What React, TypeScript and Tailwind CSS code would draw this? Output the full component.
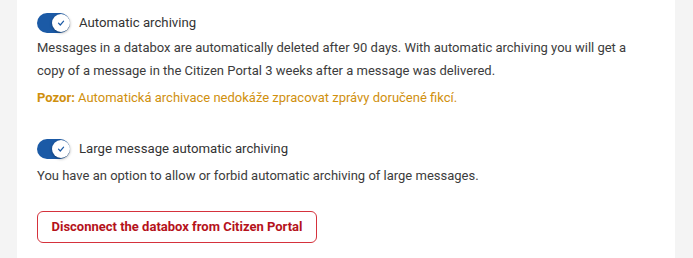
import React from "react";

function Toggle() {
  return (
    <div className="relative w-[33px] h-[20px] rounded-full bg-[#1b5aa6] shrink-0">
      <div className="absolute right-0 top-[1px] w-[18px] h-[18px] rounded-full bg-white shadow-[0_1px_3px_rgba(0,0,0,0.35)] flex items-center justify-center">
        <svg width="10" height="10" viewBox="0 0 10 10">
          <path d="M2.5 5.2 L4.3 7 L7.6 3.2" fill="none" stroke="#1b5aa6" strokeWidth="1.2" strokeLinecap="round" strokeLinejoin="round" />
        </svg>
      </div>
    </div>
  );
}

export default function App() {
  return (
    <div className="w-[693px] h-[258px] bg-[#f4f4f4] flex font-['Roboto',sans-serif] text-[13px] text-[#3c3c3c]">
      <div className="ml-[17px] w-[658px] bg-white pl-[20px] pt-[13px] pr-4">
        <div className="flex items-center gap-[9px] h-[20px]">
          <Toggle />
          <span className="text-[#333] text-[13.2px]">Automatic archiving</span>
        </div>
        <p className="mt-[3px] leading-[23px] max-w-[605px]">
          Messages in a databox are automatically deleted after 90 days. With automatic archiving you will get a
          copy of a message in the Citizen Portal 3 weeks after a message was delivered.
        </p>
        <p className="mt-[4px] leading-[23px] text-[#d0900e]">
          <span className="font-bold">Pozor:</span> Automatická archivace nedokáže zpracovat zprávy doručené fikcí.
        </p>
        <div className="flex items-center gap-[9px] h-[20px] mt-[30px]">
          <Toggle />
          <span className="text-[#333] text-[13.2px]">Large message automatic archiving</span>
        </div>
        <p className="mt-[5px] leading-[23px]">
          You have an option to allow or forbid automatic archiving of large messages.
        </p>
        <button className="mt-[24px] w-[280px] h-[32px] rounded-[6px] border-[1.5px] border-[#d5323c] text-[#b5121b] font-bold text-[13px] flex items-center justify-center">
          Disconnect the databox from Citizen Portal
        </button>
      </div>
    </div>
  );
}
